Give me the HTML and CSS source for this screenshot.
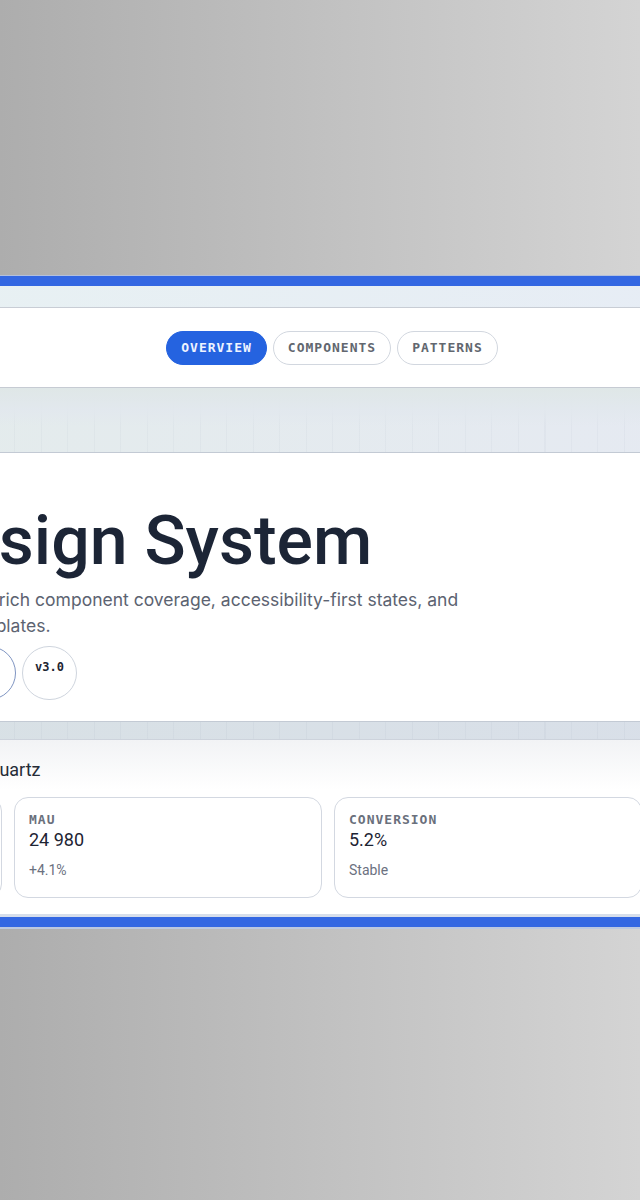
FILE: index.html
```html
<!DOCTYPE html>
<html lang="en">

<head>
  <meta charset="UTF-8" />
  <meta name="viewport" content="width=device-width, initial-scale=1.0" />
  <title>Quartz Design System</title>
  <link rel="stylesheet" href="styles.css">
</head>

<body>
  <div class="frame">
    <div class="band band-top"></div>

    <!-- Tabs -->
    <nav class="tabs">
      <a class="tab active" href="#">OVERVIEW</a>
      <a class="tab" href="#">COMPONENTS</a>
      <a class="tab" href="#">PATTERNS</a>
    </nav>

    <div class="band band-grid"></div>

    <!-- Hero -->
    <header class="hero">
      <h1>Design System</h1>
      <p>Built with rich component coverage, accessibility-first states, and page templates.</p>
      <div class="tags">
        <span class="tag tag-accent">quartz-ds</span>
        <span class="tag">v3.0</span>
      </div>
    </header>

    <div class="band band-thin"></div>

    <!-- Metrics -->
    <section class="metrics">
      <h2>Quartz</h2>
      <div class="cards">
        <div class="card">
          <div class="card-label">SESSIONS</div>
          <div class="card-value">182 400</div>
          <div class="card-note">+2.8%</div>
        </div>
        <div class="card">
          <div class="card-label">MAU</div>
          <div class="card-value">24 980</div>
          <div class="card-note">+4.1%</div>
        </div>
        <div class="card">
          <div class="card-label">CONVERSION</div>
          <div class="card-value">5.2%</div>
          <div class="card-note">Stable</div>
        </div>
      </div>
    </section>
  </div>
</body>

</html>
```

FILE: styles.css
```css
body {
  margin: 0;
  height: 1200px;
  overflow: hidden;
  font-family: Roboto, 'Liberation Sans', sans-serif;
  background: linear-gradient(90deg, #adadad 0%, #d4d4d4 100%);
  color: #1c2536;
}

/* Frame (wider than the window, cropped on both sides) */
.frame {
  margin: 276px 0 0 -330px;
  width: 1324px;
  background: #fff;
  border-top: 10px solid #3367e2;
  border-bottom: 10px solid #3367e2;
  box-shadow: 0 -1px 0 #b3c0dd, 0 2px 0 #bcc8e0;
}

/* Background bands between panels */
.band-top {
  height: 21px;
  background: linear-gradient(90deg, #e8f2f2 0%, #e6ebf6 100%);
}

.band-grid {
  height: 64px;
  background:
    linear-gradient(180deg, #dfe7e7 0%, rgba(226, 232, 238, 0.9) 35%, rgba(226, 232, 238, 0) 60%),
    repeating-linear-gradient(90deg, rgba(110, 125, 150, 0.05) 0 1px, transparent 1px 26.5px),
    linear-gradient(90deg, #e3ecea 0%, #e6e9f4 100%);
}

.band-thin {
  height: 17px;
  background:
    repeating-linear-gradient(90deg, rgba(110, 125, 150, 0.06) 0 1px, transparent 1px 26.5px),
    linear-gradient(90deg, #d8e1e4 0%, #d9dfea 100%);
}

/* Tabs */
.tabs {
  display: flex;
  justify-content: center;
  gap: 6px;
  padding: 23px 0 22px;
  background: #fff;
  border-top: 1px solid #c8cdd5;
  border-bottom: 1px solid #c6cbd3;
}

.tab {
  display: block;
  padding: 8px 14px;
  line-height: 16px;
  font-family: 'DejaVu Sans Mono', 'Liberation Mono', monospace;
  font-size: 13px;
  font-weight: bold;
  letter-spacing: 1px;
  color: #62676f;
  text-decoration: none;
  border: 1px solid #d2d7df;
  border-radius: 999px;
}

.tab.active {
  background: #2563e0;
  border-color: #2563e0;
  color: #eef3ff;
}

/* Hero */
.hero {
  padding: 51px 0 21px 248px;
  border-top: 1px solid #c3cad4;
  border-bottom: 1px solid #c3cad4;
}

.hero h1 {
  margin: 0;
  font-size: 68px;
  line-height: 75px;
  font-weight: 500;
  color: #1c2536;
}

.hero p {
  margin: 8px 0 0;
  max-width: 570px;
  font-family: Inter, Roboto, sans-serif;
  font-size: 17.5px;
  line-height: 26px;
  color: #5c6371;
}

.tags {
  display: flex;
  gap: 6px;
  margin-top: 7px;
}

.tag {
  padding: 12px 12px 24px;
  line-height: 16px;
  font-family: 'DejaVu Sans Mono', 'Liberation Mono', monospace;
  font-size: 12px;
  font-weight: bold;
  color: #1e2533;
  border: 1px solid #cfd5de;
  border-radius: 999px;
}

.tag-accent {
  padding-left: 15.5px;
  padding-right: 15.5px;
  border-color: #7f95c2;
  color: #2b59c3;
}

/* Metrics */
.metrics {
  padding: 18px 24px 16px;
  border-top: 1px solid #cdd3dc;
  border-bottom: 3px solid #d6deeb;
  background: linear-gradient(180deg, #f2f3f5 0px, #ffffff 50px);
}

.metrics h2 {
  margin: 0 0 15px 293px;
  font-size: 18px;
  line-height: 24px;
  font-weight: 400;
  color: #252b37;
}

.cards {
  display: grid;
  grid-template-columns: repeat(3, 308px);
  gap: 12px;
}

.card {
  padding: 14px 14px 17px;
  background: #fff;
  border: 1px solid #d3d8e1;
  border-radius: 14px;
}

.card-label {
  font-family: 'DejaVu Sans Mono', 'Liberation Mono', monospace;
  font-size: 13px;
  line-height: 16px;
  font-weight: bold;
  letter-spacing: 1px;
  color: #6a707c;
}

.card-value {
  font-size: 18px;
  line-height: 24px;
  color: #1d2433;
}

.card-note {
  margin-top: 8px;
  font-size: 14px;
  line-height: 20px;
  color: #6b7180;
}
```
